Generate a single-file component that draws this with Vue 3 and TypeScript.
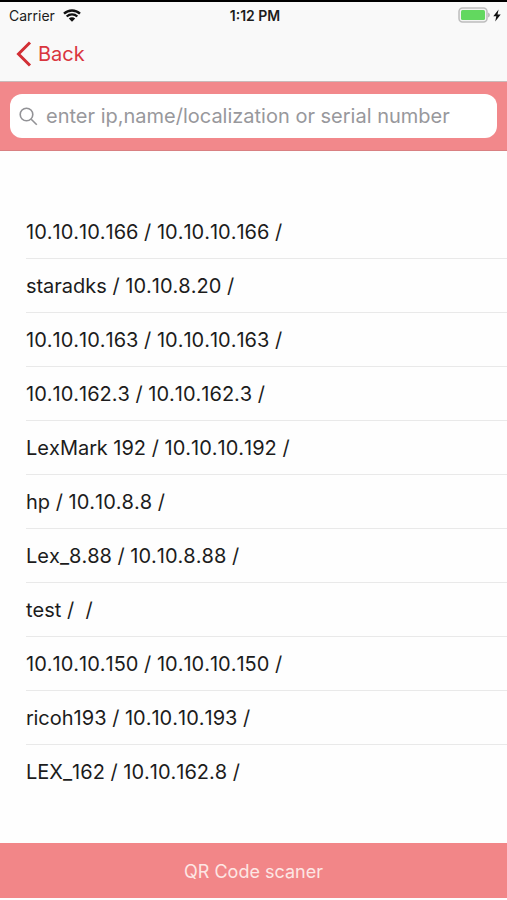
<script setup lang="ts">
import { ref } from 'vue'

interface Device {
  name: string
  ip: string
}

const devices: Device[] = [
  { name: '10.10.10.166', ip: '10.10.10.166' },
  { name: 'staradks', ip: '10.10.8.20' },
  { name: '10.10.10.163', ip: '10.10.10.163' },
  { name: '10.10.162.3', ip: '10.10.162.3' },
  { name: 'LexMark 192', ip: '10.10.10.192' },
  { name: 'hp', ip: '10.10.8.8' },
  { name: 'Lex_8.88', ip: '10.10.8.88' },
  { name: 'test', ip: '' },
  { name: '10.10.10.150', ip: '10.10.10.150' },
  { name: 'ricoh193', ip: '10.10.10.193' },
  { name: 'LEX_162', ip: '10.10.162.8' },
]

const query = ref('')
</script>

<template>
  <div class="screen">
    <header class="top">
      <div class="status">
        <div class="carrier">
          <span>Carrier</span>
          <svg class="wifi" viewBox="0 0 18 13" aria-hidden="true">
            <path d="M1 4.7a11.6 11.6 0 0 1 16 0" />
            <path d="M3.7 7.5a7.7 7.7 0 0 1 10.6 0" />
            <path class="dot" d="M9 12.8 5.8 9.5a4.6 4.6 0 0 1 6.4 0z" />
          </svg>
        </div>
        <span class="time">1:12 PM</span>
        <div class="power">
          <svg class="battery" viewBox="0 0 33 16" aria-hidden="true">
            <rect class="shell" x="1" y="1" width="28" height="14" rx="3.5" />
            <rect class="charge" x="3" y="3" width="24" height="10" rx="1.5" />
            <path class="cap" d="M30 5.5c2.6.8 2.6 4.2 0 5z" />
          </svg>
          <svg class="bolt" viewBox="0 0 8 13" aria-hidden="true">
            <path d="M5.6.5.3 7.3h3L2.2 12.5 7.7 5.5H4.5z" />
          </svg>
        </div>
      </div>
      <nav class="nav">
        <button class="back" type="button">
          <svg viewBox="0 0 16 26" aria-hidden="true"><path d="M14 1.5 2.5 13 14 24.5" /></svg>
          <span>Back</span>
        </button>
      </nav>
    </header>

    <form class="search" role="search" @submit.prevent>
      <label class="field">
        <svg viewBox="0 0 19 19" aria-hidden="true">
          <circle cx="7.5" cy="7.5" r="6.3" />
          <path d="m12.2 12.2 5.6 5.6" />
        </svg>
        <input
          v-model="query"
          type="text"
          aria-label="Search printers"
          placeholder="enter ip,name/localization or serial number"
        />
      </label>
    </form>

    <ul class="list">
      <li v-for="device in devices" :key="device.name" class="row">{{ device.name }} / {{ device.ip }} /</li>
    </ul>

    <button class="scan" type="button">QR Code scaner</button>
  </div>
</template>

<style>
body {
  margin: 0;
  background: #fff;
}
</style>

<style scoped>
.screen {
  display: flex;
  flex-direction: column;
  box-sizing: border-box;
  min-height: 100vh;
  padding-bottom: 2px;
  background: #fefefe;
  color: #1c1c1c;
  font-family: Inter, 'Liberation Sans', sans-serif;
}

button {
  padding: 0;
  border: 0;
  background: none;
  font: inherit;
  cursor: pointer;
}

.top {
  border-top: 2px solid #000;
  border-bottom: 1px solid #c9b9b9;
  background: #f9f9f9;
}

.status {
  display: grid;
  grid-template-columns: 1fr auto 1fr;
  align-items: center;
  height: 26px;
  padding: 0 6px 0 9px;
  font-size: 14px;
}

.carrier,
.power {
  display: flex;
  align-items: center;
  gap: 8px;
}

.time {
  font-weight: 600;
}

.power {
  justify-content: flex-end;
  gap: 2px;
}

.wifi {
  width: 18px;
  height: 13px;
  fill: none;
  stroke: #111;
  stroke-width: 2.4;
}

.wifi .dot {
  fill: #111;
  stroke: none;
}

.battery {
  width: 33px;
  height: 16px;
}

.shell {
  fill: #f3f3f3;
  stroke: #bdbdbd;
  stroke-width: 1.5;
}

.charge {
  fill: #62d85f;
}

.cap {
  fill: #bdbdbd;
}

.bolt {
  width: 8px;
  height: 13px;
  fill: #111;
}

.nav {
  display: flex;
  align-items: center;
  height: 52px;
  padding: 0 16px 1px;
}

.back {
  display: flex;
  align-items: center;
  gap: 6px;
  color: #d9363e;
  font-size: 20px;
}

.back svg {
  width: 16px;
  height: 26px;
  fill: none;
  stroke: #d22f35;
  stroke-width: 3;
}

.search {
  padding: 12px 10px;
  border-bottom: 1px solid #d98082;
  background: #f2888b;
}

.field {
  display: flex;
  align-items: center;
  gap: 8px;
  height: 44px;
  padding: 0 9px;
  border-radius: 12px;
  background: #fff;
}

.field svg {
  flex: none;
  width: 19px;
  height: 19px;
  fill: none;
  stroke: #929296;
  stroke-width: 1.6;
}

.field input {
  flex: 1;
  min-width: 0;
  padding: 0;
  border: 0;
  outline: 0;
  background: none;
  color: #1c1c1c;
  font: inherit;
  font-size: 20px;
  font-variation-settings: 'opsz' 24;
}

.field input::placeholder {
  color: #98989c;
  opacity: 1;
}

.list {
  flex: 1;
  margin: 0;
  padding: 54px 0 40px 26px;
  list-style: none;
}

.row {
  box-sizing: border-box;
  height: 54px;
  border-bottom: 1px solid #e9e9e9;
  font-size: 20px;
  font-kerning: none;
  font-variation-settings: 'opsz' 24;
  line-height: 54px;
  white-space: pre;
}

.row:last-child {
  border-bottom: 0;
}

.scan {
  height: 55px;
  padding-top: 2px;
  background: #f28688;
  color: #fde6e4;
  font-size: 18px;
}
</style>
